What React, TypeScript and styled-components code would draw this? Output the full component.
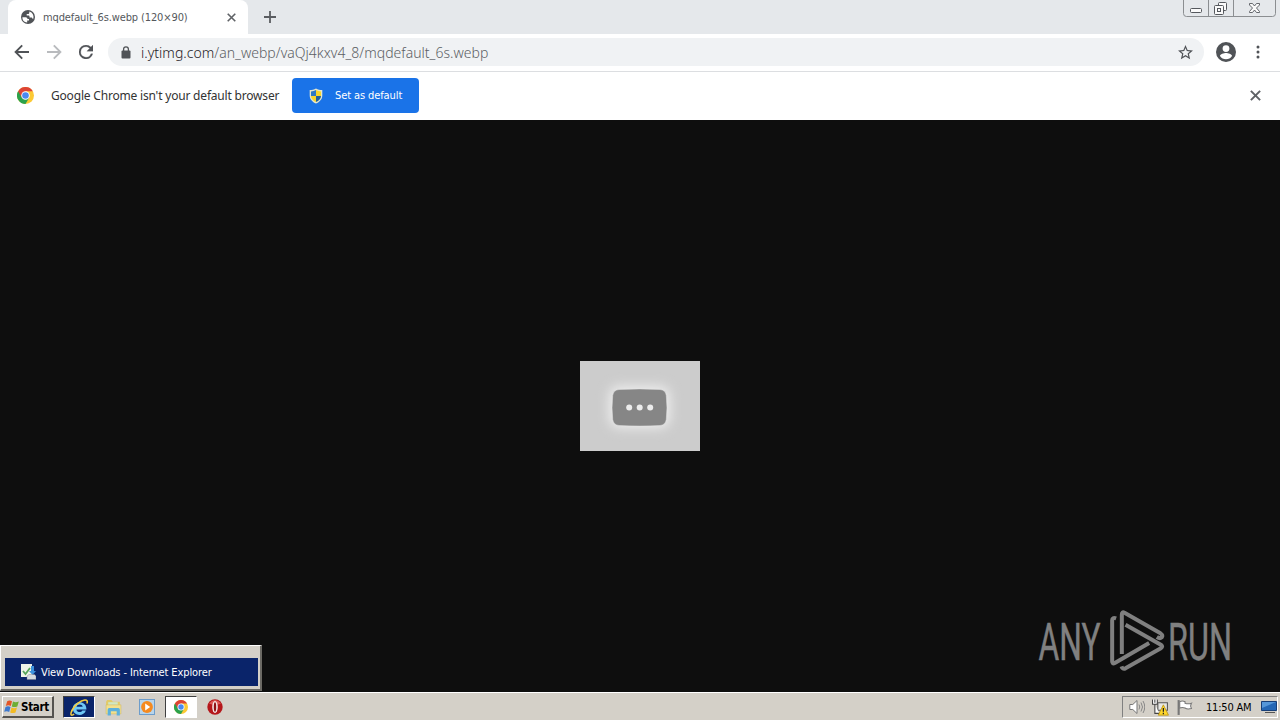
import type { ReactNode } from "react";
import styled, { createGlobalStyle } from "styled-components";

const uiFont = `"DejaVu Sans Condensed", "DejaVu Sans", sans-serif`;
const urlFont = `"Noto Sans", "Open Sans", sans-serif`;

const App = () => {
  return (
    <>
      <GlobalStyle />
      <Desktop>
        <TabStrip>
          <Tab>
            <GlobeIcon />
            <TabTitle>mqdefault_6s.webp (120×90)</TabTitle>
            <CrossIcon size={9} />
          </Tab>
          <NewTab>
            <svg width="12" height="12" viewBox="0 0 12 12">
              <path d="M6 0v12M0 6h12" stroke="#5a5d61" strokeWidth="1.8" />
            </svg>
          </NewTab>
          <WindowButtons />
        </TabStrip>
        <Toolbar>
          <NavButton>
            <ArrowIcon color="#505357" />
          </NavButton>
          <NavButton>
            <ArrowIcon color="#b9bbbe" flip />
          </NavButton>
          <NavButton>
            <svg width="14" height="14" viewBox="4 4 16 16">
              <path
                fill="#505357"
                stroke="#505357"
                strokeWidth="0.3"
                d="M17.65 6.35A7.96 7.96 0 0 0 12 4a8 8 0 1 0 7.73 10h-2.08A6 6 0 1 1 12 6c1.66 0 3.14.69 4.22 1.78L13 11h7V4z"
              />
            </svg>
          </NavButton>
          <AddressBar>
            <LockIcon />
            <Url>
              <Host>i.ytimg.com</Host>
              <Path>/an_webp/vaQj4kxv4_8/mqdefault_6s.webp</Path>
            </Url>
            <svg width="15" height="15" viewBox="2 2 20 20">
              <path
                fill="#505357"
                d="M22 9.24l-7.19-.62L12 2 9.19 8.63 2 9.24l5.46 4.73L5.82 21 12 17.27 18.18 21l-1.63-7.03L22 9.24zM12 15.4l-3.76 2.27 1-4.28-3.32-2.88 4.38-.38L12 6.1l1.71 4.04 4.38.38-3.32 2.88 1 4.28L12 15.4z"
              />
            </svg>
          </AddressBar>
          <ProfileButton>
            <svg width="20" height="20" viewBox="2 2 20 20">
              <path
                fill="#505357"
                d="M12 2a10 10 0 1 0 0 20 10 10 0 0 0 0-20zm0 3.2a3.4 3.4 0 1 1 0 6.8 3.4 3.4 0 0 1 0-6.8zm0 14a7.2 7.2 0 0 1-6-3.22c.03-2 4-3.08 6-3.08s5.97 1.09 6 3.08a7.2 7.2 0 0 1-6 3.22z"
              />
            </svg>
          </ProfileButton>
          <svg width="4" height="14" viewBox="0 0 4 14" fill="#505357">
            <circle cx="2" cy="2" r="1.5" />
            <circle cx="2" cy="7" r="1.5" />
            <circle cx="2" cy="12" r="1.5" />
          </svg>
        </Toolbar>
        <InfoBar>
          <ChromeIcon size={17} />
          <InfoText>Google Chrome isn't your default browser</InfoText>
          <DefaultButton>
            <ShieldIcon />
            <span>Set as default</span>
          </DefaultButton>
          <CrossIcon size={11} />
        </InfoBar>
        <Viewer>
          <Thumbnail>
            <ThumbnailImage />
          </Thumbnail>
          <Watermark>
            <AnyRunLogo />
          </Watermark>
          <TaskPopup>
            <PopupItem>
              <DownloadsIcon />
              <span>View Downloads - Internet Explorer</span>
            </PopupItem>
          </TaskPopup>
        </Viewer>
        <Taskbar>
          <StartButton>
            <WindowsFlag />
            <span>Start</span>
          </StartButton>
          <QuickLaunch>
            <TaskButton $background="#0a246a">
              <ExplorerIcon />
            </TaskButton>
            <TaskButton>
              <FolderIcon />
            </TaskButton>
            <TaskButton>
              <PlayerIcon />
            </TaskButton>
            <TaskButton $background="#ffffff">
              <ChromeIcon size={14} />
            </TaskButton>
            <TaskButton>
              <OperaIcon />
            </TaskButton>
          </QuickLaunch>
          <Tray>
            <VolumeIcon />
            <NetworkIcon />
            <FlagIcon />
            <Clock>11:50 AM</Clock>
            <MonitorIcon />
          </Tray>
        </Taskbar>
      </Desktop>
    </>
  );
};

const Icon = ({ size, children }: { size: number; children: ReactNode }) => (
  <svg width={size} height={size} viewBox="0 0 16 16">
    {children}
  </svg>
);

const CrossIcon = ({ size }: { size: number }) => (
  <svg width={size} height={size} viewBox="0 0 10 10">
    <path d="M.8.8l8.4 8.4M9.2.8L.8 9.2" stroke="#5f6266" strokeWidth="1.8" />
  </svg>
);

const GlobeIcon = () => (
  <svg width="14" height="14" viewBox="0 0 14 14">
    <circle cx="7" cy="7" r="7" fill="#505357" />
    <path
      d="M1.4 7.2h3.2c1.3.1 2 .8 1.9 1.9H8v1.3H6.2v2c-3 .1-4.9-2.3-4.8-5.2z"
      fill="#fff"
    />
    <path
      d="M8.3 1.5v1.2c0 .8-.6 1.3-1.4 1.3H5.7v1.6h1.8c.7 0 1 .4 1 1v.8h1.600c.8 0 1.200.4 1.400 1.100l.6.800c1.400-3.200-.5-7-3.800-7.800z"
      fill="#fff"
    />
  </svg>
);

const ArrowIcon = ({ color, flip }: { color: string; flip?: boolean }) => (
  <svg width="16" height="16" viewBox="0 0 16 16">
    <path
      d="M15 8H2M8.2 1.4L1.6 8l6.6 6.6"
      transform={flip ? "rotate(180 8 8)" : undefined}
      fill="none"
      stroke={color}
      strokeWidth="1.9"
    />
  </svg>
);

const LockIcon = () => (
  <svg width="10" height="13" viewBox="0 0 10 13">
    <rect x="0.5" y="4.5" width="9" height="8" rx="1" fill="#505357" />
    <path d="M2.6 5V3.3a2.4 2.4 0 0 1 4.8 0V5" fill="none" stroke="#505357" strokeWidth="1.3" />
  </svg>
);

const ChromeIcon = ({ size }: { size: number }) => (
  <Icon size={size}>
    <circle cx="8" cy="8" r="8" fill="#fcc934" />
    <path d="M8 8L1.07 4A8 8 0 0 0 8 16l3.46-6z" fill="#2ba24c" />
    <path d="M1.07 4A8 8 0 0 1 14.93 4H8v4L4.54 10z" fill="#dd4435" />
    <circle cx="8" cy="8" r="4" fill="#fff" />
    <circle cx="8" cy="8" r="3.1" fill="#4a8af0" />
  </Icon>
);

const ShieldIcon = () => (
  <svg width="14" height="16" viewBox="0 0 14 16">
    <path d="M7 0.5c2 1.2 4 1.6 6.300 1.600v5.400c0 3.800-2.700 6.500-6.300 8-3.600-1.500-6.300-4.200-6.300-8V2.100C3 2.100 5 1.700 7 .5z" fill="#e3e6cf" />
    <path d="M7 2C5.4 2.9 3.8 3.3 2 3.4V8h5z" fill="#2e79c5" />
    <path d="M7 2c1.6.9 3.2 1.3 5 1.4V8H7z" fill="#f7d52c" />
    <path d="M2 8h5v6c-2.9-1.2-4.9-3.2-5-6z" fill="#f7d52c" />
    <path d="M12 8H7v6c2.9-1.2 4.9-3.2 5-6z" fill="#236099" />
  </svg>
);

const WindowButtons = () => (
  <WindowFrame width="94" height="18" viewBox="0 0 94 18">
    <path
      d="M.5 0v13.5a3 3 0 0 0 3 3h86a3 3 0 0 0 3-3V0M25.5 0v16M50.5 0v16"
      fill="none"
      stroke="#8b8e91"
    />
    <rect x="7.5" y="8.5" width="11" height="4" rx="1" fill="#fafafa" stroke="#55585d" />
    <rect x="35.5" y="2.500" width="8" height="8" rx="1" fill="#fafafa" stroke="#55585d" />
    <rect x="31.5" y="5.5" width="9" height="9" rx="1" fill="#fafafa" stroke="#55585d" />
    <rect x="34.5" y="8.5" width="3" height="3" fill="none" stroke="#55585d" />
    <path
      d="M66.5 3.500h3l2 2.500 2-2.500h3v1.500L73.500 8l3 3.500v1h-3l-2-2.500-2 2.500h-3v-1l3-3.500-3-3z"
      fill="#fafafa"
      stroke="#55585d"
      strokeWidth="0.9"
    />
  </WindowFrame>
);

const ThumbnailImage = () => (
  <svg width="120" height="90" viewBox="0 0 120 90">
    <defs>
      <filter id="glow" x="-50%" y="-50%" width="200%" height="200%">
        <feGaussianBlur stdDeviation="6" />
      </filter>
    </defs>
    <rect width="120" height="90" fill="#cccccc" />
    <rect x="29" y="25" width="61" height="42" rx="10" fill="#ededed" filter="url(#glow)" />
    <path
      d="M39 28.500q21-1.200 41 0 5.500.5 6.300 6 1.300 12 0 24-.8 5.500-6.300 6-20 1.200-41 0-5.500-.5-6.300-6-1.300-12 0-24 .8-5.500 6.300-6z"
      fill="#868686"
      stroke="#e4e4e4"
      strokeWidth="0.500"
    />
    <g fill="#ececec">
      <circle cx="49.200" cy="46.500" r="3" />
      <circle cx="59.700" cy="46.500" r="3" />
      <circle cx="70.200" cy="46.500" r="3" />
    </g>
  </svg>
);

const AnyRunLogo = () => (
  <svg width="200" height="72" viewBox="0 0 200 72">
    <g
      fill="#808080"
      stroke="#808080"
      strokeWidth="0.5"
      fontFamily="Roboto, sans-serif"
      fontSize="52"
    >
      <text x="0.5" y="55.5" textLength="62" lengthAdjust="spacingAndGlyphs">
        ANY
      </text>
      <text x="130" y="55.5" textLength="64" lengthAdjust="spacingAndGlyphs">
        RUN
      </text>
    </g>
    <g
      transform="translate(65.500 0) scale(0.3333)"
      fill="none"
      stroke="#808080"
      strokeWidth="12"
      strokeLinejoin="round"
    >
      <path d="M55 150V32q0-10 8-6l108 62q8 5 4 12-6 5-15-1" />
      <path d="M66 62l106 60q8 6 0 11L66 193q-9 4-12-6" />
      <path d="M38 43q-12-4-12 6v123q0 9 8 5l103-60" />
    </g>
  </svg>
);

const DownloadsIcon = () => (
  <Icon size={16}>
    <path d="M1 0h11v13H1z" fill="#eef3e8" />
    <path d="M3 7l2.5 3L10 4" fill="none" stroke="#57a45b" strokeWidth="1.8" />
    <path d="M11 2h3v5h2l-3.5 4L9 7h2z" fill="#3d92df" />
    <path d="M7 12l2-1.5h5.5L16 12v3.5H7z" fill="#d5dbe1" stroke="#778" strokeWidth="0.4" />
  </Icon>
);

const WindowsFlag = () => (
  <Icon size={16}>
    <path d="M3.200 2.200Q5.500.8 8 2.200L6.800 7Q4.400 5.700 1.800 7z" fill="#e45627" />
    <path d="M9 2.600q2.500 1.300 5.800 0L13.300 7.400q-3 1.200-5.500 0z" fill="#6eae36" />
    <path d="M1.500 8q2.500-1.300 5 0L5.200 13Q2.800 11.500.2 12.800z" fill="#3d79cf" />
    <path d="M7.500 8.500q2.500 1.300 5.500 0l-1.500 4.900q-2.800 1.200-5.300 0z" fill="#f3bb24" />
  </Icon>
);

const ExplorerIcon = () => (
  <Icon size={19}>
    <path
      d="M13.8 9.6H5.400c.3 2.600 4 3 5 .9h3C11.500 16.200 2.400 15.200 2.400 8.800c0-6.800 11.800-7.600 11.400.8zM5.500 7.400h5.200c-.4-2.600-4.800-2.500-5.200 0z"
      fill="#6fc8f6"
    />
    <path d="M3.5 13.600C-1.500 17 1 9 6.500 4.500 10.500 1.200 16 .2 14.200 4.600" fill="none" stroke="#f3cc43" strokeWidth="1.3" />
  </Icon>
);

const FolderIcon = () => (
  <Icon size={17}>
    <path d="M1 2.500l1-1.500h4l1.500 1.500H14V14H1z" fill="#e2ca68" />
    <path d="M3 3h9v4H3z" fill="#cfe8c4" />
    <path d="M1 5.500h14V14H1z" fill="#f2e08d" stroke="#cdb765" strokeWidth="0.500" />
    <path d="M2.500 15.500V10q0-1.500 1.500-1.500h8.500q1.500 0 1.500 1.500v5.500h-3v-4H5.500v4z" fill="#5cb0dc" />
  </Icon>
);

const PlayerIcon = () => (
  <Icon size={16}>
    <rect x="0.5" y="0.5" width="15" height="15" fill="#b8d5eb" stroke="#6d9dcb" />
    <circle cx="8" cy="8" r="5.9" fill="#f58a1f" />
    <path d="M6.200 4.500v7l5-3.500z" fill="#fff" />
  </Icon>
);

const OperaIcon = () => (
  <Icon size={16}>
    <circle cx="8" cy="8" r="7.7" fill="#b5171b" />
    <path d="M2 4.500Q8-2.500 14 4.500 8 7 2 4.500z" fill="#de5856" />
    <ellipse cx="8" cy="8" rx="2.8" ry="6" fill="#f5e9e9" />
    <ellipse cx="8" cy="8" rx="1.2" ry="4.8" fill="#8f1115" />
  </Icon>
);

const VolumeIcon = () => (
  <Icon size={16}>
    <path d="M.8 5.500h3L8 1.500v13l-4.200-4h-3z" fill="#fff" stroke="#777" />
    <path d="M10 5.500q1.500 2.500 0 5M12 3.500q3 4.500 0 9M14 2q3.500 6 0 12" fill="none" stroke="#888" />
  </Icon>
);

const NetworkIcon = () => (
  <Icon size={17}>
    <path d="M5.500 3.500h9v7h-9z" fill="#e7e7e4" stroke="#555" />
    <path d="M.5.500v4.500h4.500V.5M2.700.5v3M2.700 5v8.500h4" fill="#fff" stroke="#444" />
    <path d="M10.700 5.500l4.800 9.700H5.900z" fill="#ffd72b" stroke="#b48b08" strokeWidth="0.7" />
    <path d="M10.700 8.500v3.500M10.700 13v1.300" stroke="#222" strokeWidth="1.2" />
  </Icon>
);

const FlagIcon = () => (
  <Icon size={17}>
    <path d="M2.500 1v14" stroke="#777" strokeWidth="2" />
    <path d="M3.500 2.500q2.500-1.200 5 0v1.500q3 1 6 0-1.500 2.500 0 5-4 1-6-.5-2.500-1-5 0z" fill="#fff" stroke="#777" />
  </Icon>
);

const MonitorIcon = () => (
  <svg width="16" height="14" viewBox="0 0 16 14">
    <path d="M.5 1.500h15v9H.5z" fill="#2467b5" stroke="#173f78" />
    <path d="M1 2h14L1 8z" fill="#5597d9" />
    <path d="M4 12.500h10" stroke="#555" />
  </svg>
);

const GlobalStyle = createGlobalStyle`
  * {
    box-sizing: border-box;
  }

  body {
    margin: 0;
    overflow: hidden;
  }

  svg {
    display: block;
    flex-shrink: 0;
  }
`;

const Desktop = styled.div`
  display: flex;
  flex-direction: column;
  width: 1280px;
  height: 720px;
  background: #0e0e0e;
  font-family: ${uiFont};
  font-size: 11px;
  white-space: nowrap;
`;

const TabStrip = styled.div`
  display: flex;
  height: 34px;
  padding-left: 8px;
  background: #e5e8eb;
`;

const Tab = styled.div`
  display: flex;
  align-items: center;
  width: 240px;
  padding: 0 12px 0 13px;
  border-radius: 8px 8px 0 0;
  background: #fff;
`;

const TabTitle = styled.span`
  flex: 1;
  margin-left: 8px;
  color: #55585c;
  letter-spacing: -0.12px;
`;

const NewTab = styled.div`
  display: flex;
  align-items: center;
  margin-left: 16px;
`;

const WindowFrame = styled.svg`
  margin: 0 3px 0 auto;
`;

const Toolbar = styled.div`
  display: flex;
  align-items: center;
  height: 38px;
  padding: 0 20px 1px 6px;
  border-bottom: 1px solid #dcdee1;
  background: #fff;
`;

const NavButton = styled.div`
  display: flex;
  justify-content: center;
  width: 32px;
`;

const AddressBar = styled.div`
  display: flex;
  align-items: center;
  flex: 1;
  height: 28px;
  margin-left: 6px;
  padding: 0 11px 0 13px;
  border-radius: 14px;
  background: #f0f2f4;
`;

const Url = styled.div`
  display: flex;
  flex: 1;
  margin-left: 10px;
  font-family: ${urlFont};
  font-size: 14px;
  font-weight: 300;
  letter-spacing: 0.02px;
`;

const Host = styled.span`
  color: #1f2125;
`;

const Path = styled.span`
  color: #5c5f64;
`;

const ProfileButton = styled.div`
  margin: 0 20px 0 12px;
`;

const InfoBar = styled.div`
  display: flex;
  align-items: center;
  height: 48px;
  padding: 0 19px 1px 17px;
  background: #fff;

  > svg:last-child {
    margin-left: auto;
  }
`;

const InfoText = styled.span`
  width: 228px;
  margin: 0 13px 0 17px;
  color: #333;
  font-family: ${urlFont};
  font-size: 12px;
  letter-spacing: -0.19px;
`;

const DefaultButton = styled.div`
  display: flex;
  align-items: center;
  gap: 12px;
  width: 127px;
  height: 35px;
  padding-left: 17px;
  border-radius: 4px;
  background: #1a73e8;
  color: #fff;
  font-size: 11px;
  letter-spacing: -0.1px;
`;

const Viewer = styled.div`
  position: relative;
  display: flex;
  flex: 1;
  background: #0e0e0e;
`;

const Thumbnail = styled.div`
  margin: 241px auto 0;
`;

const Watermark = styled.div`
  position: absolute;
  right: 42px;
  bottom: 16px;
`;

const TaskPopup = styled.div`
  position: absolute;
  left: 0;
  bottom: 1px;
  width: 262px;
  height: 46px;
  padding: 12px 2px 3px 4px;
  border: 1px solid #fff;
  border-right: 2px solid #6b6964;
  border-bottom: 2px solid #6b6964;
  background: #d4d0c8;
`;

const PopupItem = styled.div`
  display: flex;
  align-items: center;
  gap: 5px;
  height: 28px;
  padding-left: 15px;
  background: #0a246a;
  color: #fff;
  font-size: 11px;
  letter-spacing: -0.11px;
`;

const Taskbar = styled.div`
  display: flex;
  align-items: center;
  height: 28px;
  padding: 1px 2px 0;
  border-top: 1px solid #fff;
  background: #d4d0c8;
`;

const StartButton = styled.div`
  display: flex;
  align-items: center;
  gap: 1px;
  width: 52px;
  height: 22px;
  padding-left: 1px;
  border: 1px solid #fff;
  border-right: 2px solid #55534f;
  border-bottom: 2px solid #55534f;
  color: #000;
  font-weight: bold;
  font-size: 11.5px;
  letter-spacing: -0.3px;
`;

const QuickLaunch = styled.div`
  display: flex;
  gap: 2px;
  margin-left: 9px;
`;

const TaskButton = styled.div<{ $background?: string }>`
  display: flex;
  justify-content: center;
  align-items: center;
  width: 32px;
  height: 22px;
  border: 1px solid transparent;
  border-color: ${({ $background }) =>
    $background ? "#404040 #fff #fff #404040" : "transparent"};
  background: ${({ $background }) => $background ?? "transparent"};
`;

const Tray = styled.div`
  display: flex;
  align-items: center;
  gap: 7px;
  width: 156px;
  height: 22px;
  margin-left: auto;
  padding-left: 6px;
  border: 1px solid #808080;
  border-right-color: #fff;
  border-bottom-color: #fff;
`;

const Clock = styled.span`
  width: 48px;
  margin-left: 6px;
  color: #000;
  letter-spacing: -0.2px;
`;

export default App;
